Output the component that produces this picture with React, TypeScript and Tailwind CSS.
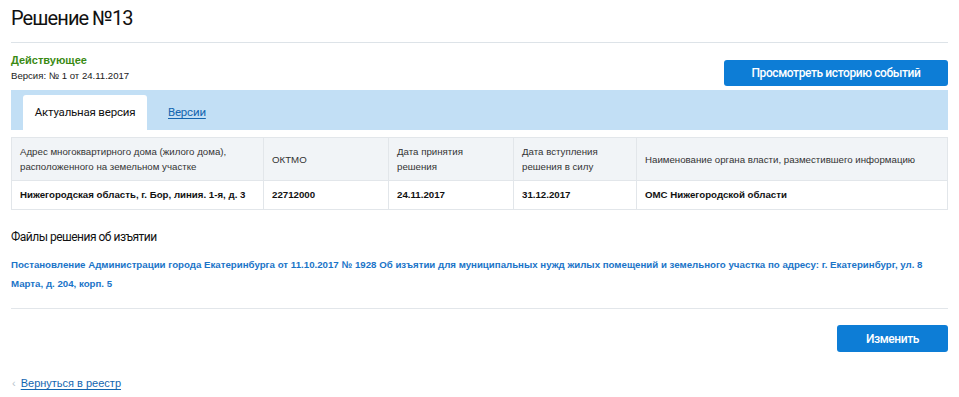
const columns = [
  { title: "Адрес многоквартирного дома (жилого дома), расположенного на земельном участке", value: "Нижегородская область, г. Бор, линия. 1-я, д. 3", w: "w-[251px]" },
  { title: "ОКТМО", value: "22712000", w: "w-[125px]" },
  { title: "Дата принятия решения", value: "24.11.2017", w: "w-[125px]" },
  { title: "Дата вступления решения в силу", value: "31.12.2017", w: "w-[123px]" },
  { title: "Наименование органа власти, разместившего информацию", value: "ОМС Нижегородской области", w: "flex-1" },
]

export default function App() {
  return (
    <div className="w-[959px] h-[397px] bg-white px-[11px] pt-[5px] font-['Liberation_Sans',Arial,sans-serif] text-[#1a1a1a]">
      <h1 className="font-['Roboto',sans-serif] text-[20px] tracking-[-0.9px] leading-[26px] text-[#111] pb-[11px] border-b border-[#dde3e8]">
        Решение №13
      </h1>

      <div className="flex justify-between items-start mt-[10px]">
        <div>
          <div className="text-[11px] font-bold text-[#3a8a14] leading-[14px]">Действующее</div>
          <div className="text-[9.6px] leading-[14px] mt-[2px]">Версия: № 1 от 24.11.2017</div>
        </div>
        <button className="w-[224px] h-[26px] mt-[7px] rounded-[3px] bg-[#0d7dd6] text-white font-['Roboto',sans-serif] font-medium text-[12px] tracking-[-0.4px]">
          Просмотреть историю событий
        </button>
      </div>

      <div className="mt-[4px] h-[40px] bg-[#c2dff5] flex items-end pl-[12px]">
        <div className="h-[35px] w-[124px] bg-white rounded-t-[3px] flex items-center justify-center font-['Roboto',sans-serif] text-[11.5px] tracking-[-0.2px] text-[#111]">
          Актуальная версия
        </div>
        <a className="h-[35px] ml-[21px] flex items-center font-['Roboto',sans-serif] text-[11.5px] tracking-[-0.2px] text-[#1466b0] underline underline-offset-2">
          Версии
        </a>
      </div>

      <div className="mt-[7px] flex border border-[#e2e6ea] text-[9.7px]">
        {columns.map((c, i) => (
          <div key={i} className={`${c.w} flex flex-col ${i > 0 ? "border-l border-[#e2e6ea]" : ""}`}>
            <div className="h-[43px] bg-[#f1f4f7] border-b border-[#e2e6ea] flex items-center px-[8px] leading-[15px] text-[#333]">
              {c.title}
            </div>
            <div className="h-[28px] flex items-center px-[8px] font-bold text-[#111]">{c.value}</div>
          </div>
        ))}
      </div>

      <div className="mt-[19px] font-['Roboto',sans-serif] text-[12px] tracking-[-0.5px] text-[#111] leading-[16px]">
        Файлы решения об изъятии
      </div>

      <div className="mt-[10px] text-[9.7px] font-bold text-[#1a74c8] leading-[19px] pb-[15px] border-b border-[#e2e6ea]">
        Постановление Администрации города Екатеринбурга от 11.10.2017 № 1928 Об изъятии для муниципальных нужд жилых помещений и земельного участка по адресу: г. Екатеринбург, ул. 8 Марта, д. 204, корп. 5
      </div>

      <div className="flex justify-end mt-[16px]">
        <button className="w-[111px] h-[27px] rounded-[3px] bg-[#0d7dd6] text-white font-['Roboto',sans-serif] font-medium text-[12px] tracking-[-0.4px]">
          Изменить
        </button>
      </div>

      <div className="mt-[23px] flex items-center text-[11px] leading-[16px]">
        <span className="text-[#b8c4ce] text-[11px] ml-[1px] mr-[5px]">‹</span>
        <a className="text-[#1466b0] underline underline-offset-2">Вернуться в реестр</a>
      </div>
    </div>
  )
}
